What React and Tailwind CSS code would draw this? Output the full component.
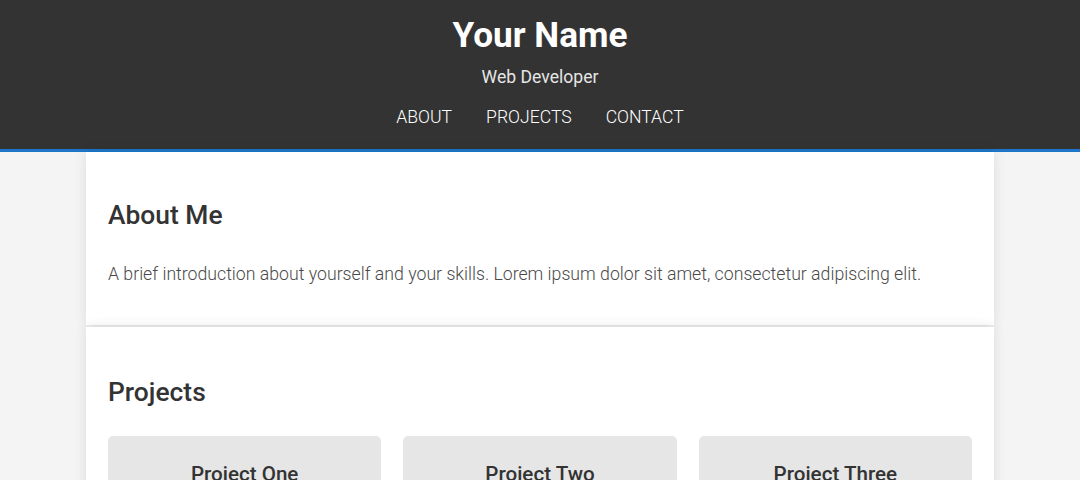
import React from 'react';

const projects = ['Project One', 'Project Two', 'Project Three'];
const nav = ['About', 'Projects', 'Contact'];

function Section({ title, children, top }) {
  return (
    <section className={`bg-white px-[22px] pb-[37px] shadow-[0_0_12px_rgba(0,0,0,0.1)] ${top}`}>
      <h2 className="text-[26.4px] font-medium leading-[31px] text-[#333]">{title}</h2>
      {children}
    </section>
  );
}

export default function App() {
  return (
    <div className="min-h-screen bg-[#f4f4f4] font-['Roboto',sans-serif] text-[#333]">
      <header className="bg-[#333] border-b-[3px] border-[#1d76c9] h-[152px] pt-[14px] flex flex-col items-center text-white">
        <h1 className="text-[35.2px] font-bold leading-[42px]">Your Name</h1>
        <p className="mt-[8px] text-[17.6px] leading-[26.4px] text-[#e6e6e6]">Web Developer</p>
        <nav className="mt-[14px] flex gap-[34px] text-[17.6px] font-light leading-[26.4px] uppercase">
          {nav.map((n) => (
            <a key={n} href="#" className="text-white">
              {n}
            </a>
          ))}
        </nav>
      </header>

      <main className="w-[908px] mx-auto flex flex-col gap-[2px]">
        <Section title="About Me" top="pt-[48px]">
          <p className="mt-[30px] text-[17.7px] font-light leading-[27px] text-[#4a4a4a]">
            A brief introduction about yourself and your skills. Lorem ipsum dolor sit amet, consectetur adipiscing elit.
          </p>
        </Section>
        <Section title="Projects" top="pt-[50px]">
          <div className="mt-[28px] grid grid-cols-3 gap-[22px]">
            {projects.map((p) => (
              <div key={p} className="bg-[#e6e6e6] rounded-[5px] pt-[26px] pb-[24px] px-5 text-center">
                <h3 className="text-[20.6px] font-medium leading-[24px] text-[#333]">{p}</h3>
                <p className="mt-3 text-[16px] font-light text-[#555]">Description of the project.</p>
              </div>
            ))}
          </div>
        </Section>
      </main>
    </div>
  );
}
